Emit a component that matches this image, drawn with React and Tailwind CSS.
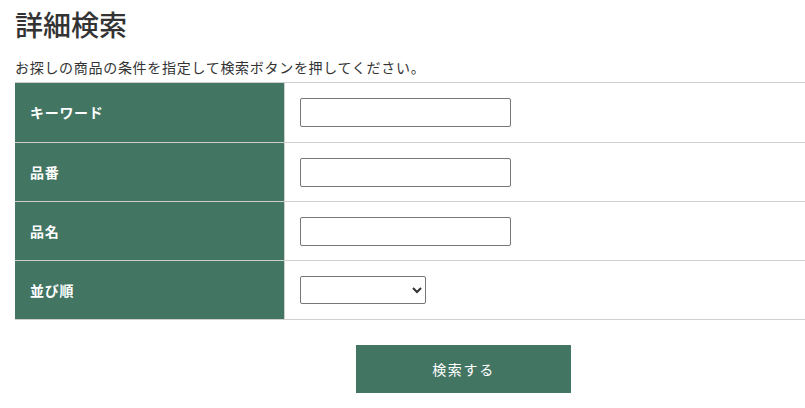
import React from 'react';

const rows = [
  { label: 'キーワード', type: 'text' },
  { label: '品番', type: 'text' },
  { label: '品名', type: 'text' },
  { label: '並び順', type: 'select' },
];

export default function App() {
  return (
    <div className="w-[805px] h-[408px] overflow-hidden bg-white text-[#333] font-['Noto_Sans_CJK_JP','Noto_Sans',sans-serif]">
      <div className="w-[897px] ml-[15px]">
        <h1 className="text-[28px] leading-none pt-[10px] pb-[19px] font-medium text-[#333]">詳細検索</h1>
        <p className="text-[14px] leading-[20px] mb-[5px] tracking-[0.05em]">
          お探しの商品の条件を指定して検索ボタンを押してください。
        </p>
        <table className="w-full border-collapse">
          <tbody>
            {rows.map((row, i) => (
              <tr key={row.label} className={i === 0 ? 'h-[60px]' : 'h-[59px]'}>
                <th className="w-[269px] bg-[#437563] text-white text-left text-[14px] font-bold tracking-[0.05em] pl-[15px] border border-[#cfcfcf] border-l-0">
                  {row.label}
                </th>
                <td className="pl-[15px] border-y border-[#cfcfcf]">
                  {row.type === 'text' ? (
                    <input
                      type="text"
                      className="block w-[211px] h-[29px] border border-[#767676] rounded-[2px] bg-white"
                    />
                  ) : (
                    <select className="block w-[126px] h-[28px] border border-[#767676] rounded-[2px] bg-white text-[13px]">
                      <option></option>
                    </select>
                  )}
                </td>
              </tr>
            ))}
          </tbody>
        </table>
        <div className="flex justify-center pt-[25px]">
          <button className="w-[215px] h-[48px] bg-[#437563] text-white text-[14px] tracking-[0.12em]">
            検索する
          </button>
        </div>
      </div>
    </div>
  );
}
